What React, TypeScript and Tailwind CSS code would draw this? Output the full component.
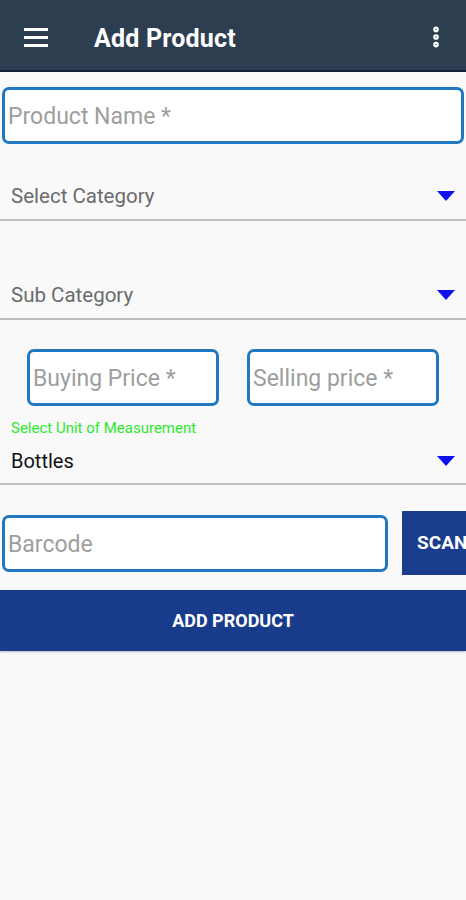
import { EllipsisVertical } from 'lucide-react'

const Caret = () => (
  <svg width="18" height="10" viewBox="0 0 18 10" className="shrink-0">
    <path d="M0 0h18L9 10z" fill="#1010f0" />
  </svg>
)

// 下拉选择行：文字 + 蓝色三角 + 灰色底线
function DropRow({ label, dark, className }: { label: string; dark?: boolean; className?: string }) {
  return (
    <div
      className={`flex items-center justify-between pl-[11px] pr-[11px] border-b-2 border-[#bdbdbd] ${className ?? ''}`}
    >
      <span className={dark ? 'text-[20px] text-[#111]' : 'text-[20.5px] text-[#6b6b6b]'}>{label}</span>
      <Caret />
    </div>
  )
}

function Field({ placeholder, className }: { placeholder: string; className?: string }) {
  return (
    <div
      className={`flex items-center bg-white border-[3px] border-[#1f78c0] rounded-[7px] px-[3px] pt-[4px] ${className ?? ''}`}
    >
      <span className="text-[23px] text-[#9e9e9e] whitespace-nowrap">{placeholder}</span>
    </div>
  )
}

export default function App() {
  return (
    <div className="w-[466px] h-[900px] bg-[#f9f9f9] font-['Roboto','Noto_Sans',sans-serif] overflow-hidden">
      {/* 顶部栏 */}
      <div className="h-[72px] bg-[#2e3e51] border-b-2 border-[#142039] flex items-center pt-[4px]">
        <div className="w-[24px] ml-[24px] flex flex-col gap-[5px]">
          <span className="h-[3px] bg-white" />
          <span className="h-[3px] bg-white" />
          <span className="h-[3px] bg-white" />
        </div>
        <h1 className="ml-[46px] mt-[3px] text-[25px] font-bold text-white tracking-[0.2px]">Add Product</h1>
        <EllipsisVertical className="ml-auto mr-[17px] text-white" size={26} strokeWidth={3.2} />
      </div>

      <Field placeholder="Product Name *" className="mx-[2px] mt-[15px] h-[57px]" />

      <DropRow label="Select Category" className="mt-[29px] h-[48px]" />
      <DropRow label="Sub Category" className="mt-[51px] h-[48px]" />

      <div className="flex gap-[28px] pl-[27px] mt-[29px]">
        <Field placeholder="Buying Price *" className="w-[192px] h-[57px]" />
        <Field placeholder="Selling price *" className="w-[192px] h-[57px]" />
      </div>

      <div className="mt-[12px] pl-[11px] text-[15px] leading-[20px] text-[#2ee82e]">Select Unit of Measurement</div>
      <DropRow label="Bottles" dark className="h-[47px]" />

      <div className="flex items-center mt-[26px]">
        <Field placeholder="Barcode" className="ml-[2px] w-[386px] h-[57px]" />
        <button className="ml-[14px] h-[64px] flex-1 bg-[#1a3c8c] text-white font-bold text-[19px] pl-[15px] text-left overflow-hidden whitespace-nowrap">
          SCAN
        </button>
      </div>

      <button className="mt-[15px] w-full h-[61px] bg-[#183c8b] text-white font-bold text-[18px] shadow-[0_1px_2px_rgba(0,0,0,0.25)]">
        ADD PRODUCT
      </button>
    </div>
  )
}
